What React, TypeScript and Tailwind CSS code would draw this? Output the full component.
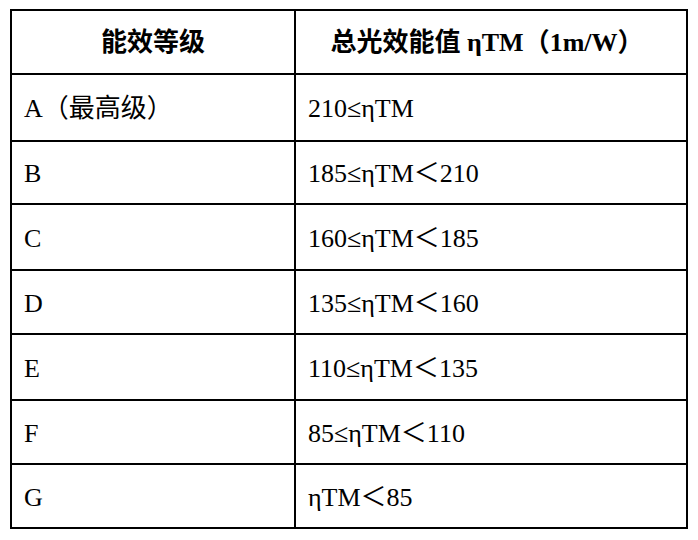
import React from "react";

const rows: { grade: string; value: string; h: string }[] = [
  { grade: "A（最高级）", value: "210≤ηTM", h: "h-[67px]" },
  { grade: "B", value: "185≤ηTM＜210", h: "h-[63px]" },
  { grade: "C", value: "160≤ηTM＜185", h: "h-[66px]" },
  { grade: "D", value: "135≤ηTM＜160", h: "h-[64px]" },
  { grade: "E", value: "110≤ηTM＜135", h: "h-[66px]" },
  { grade: "F", value: "85≤ηTM＜110", h: "h-[64px]" },
  { grade: "G", value: "ηTM＜85", h: "h-[64px]" },
];

export default function App() {
  return (
    <div
      className="w-[698px] h-[540px] bg-white pt-[9px] pl-[10px] text-black"
      style={{ fontFamily: '"Liberation Serif", "Noto Sans CJK SC", serif' }}
    >
      <div className="w-[678px] border-2 border-black flex flex-col">
        <div className="flex h-[62px] font-bold text-[26px]">
          <div className="w-[282px] flex items-center justify-center">能效等级</div>
          <div className="w-[392px] border-l-2 border-black flex items-center justify-center pr-[8px]">
            总光效能值 ηTM（1m/W）
          </div>
        </div>
        {rows.map((r) => (
          <div key={r.grade} className={`flex border-t-2 border-black text-[26px] ${r.h}`}>
            <div className="w-[282px] flex items-center pl-[12px] pt-[2px]">{r.grade}</div>
            <div className="w-[392px] border-l-2 border-black flex items-center pl-[12px] pt-[2px]">
              {r.value}
            </div>
          </div>
        ))}
      </div>
    </div>
  );
}
